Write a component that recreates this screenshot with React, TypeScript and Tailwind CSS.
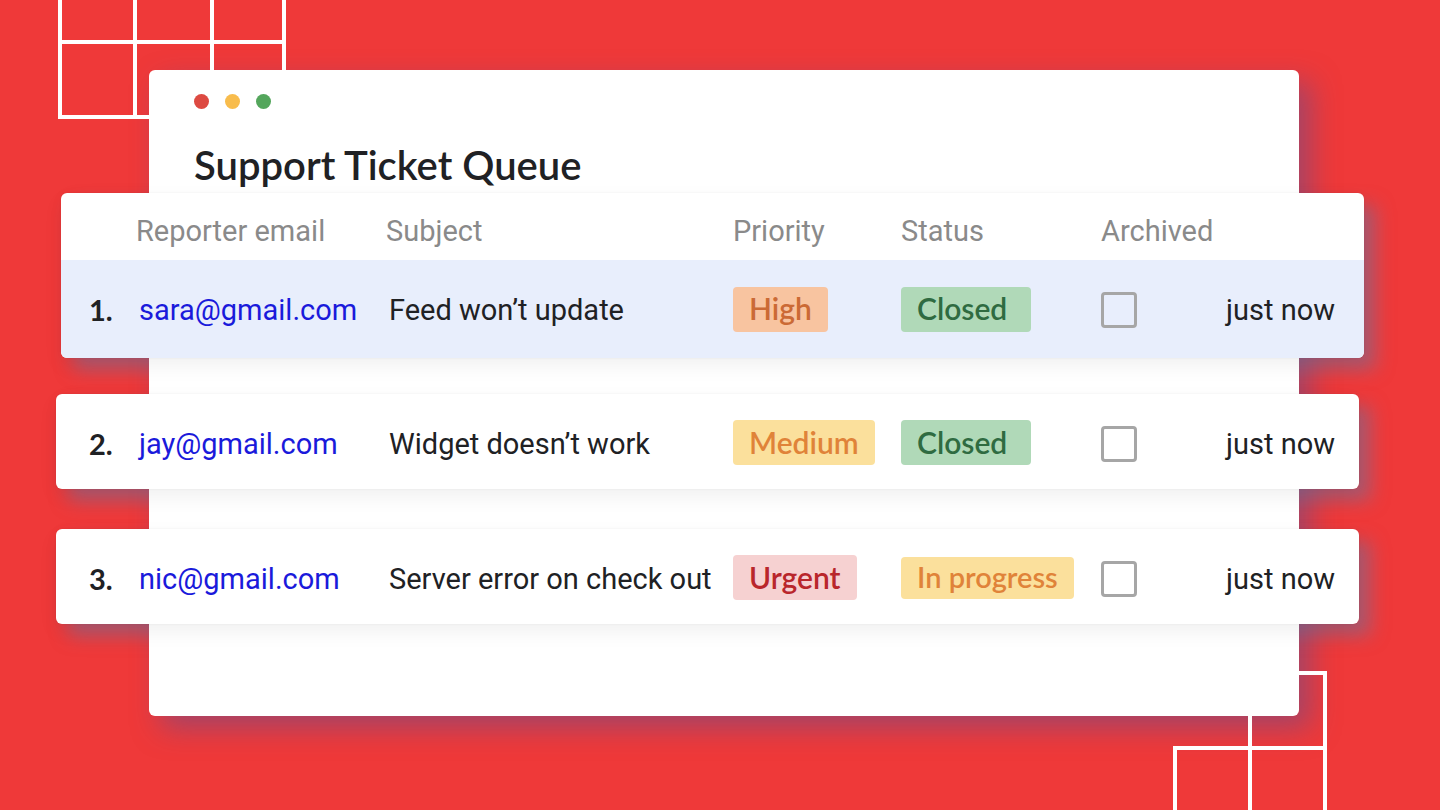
import React from "react";

type Tone = "high" | "medium" | "urgent" | "closed" | "progress";

type Ticket = {
  id: number;
  email: string;
  subject: string;
  priority: { label: string; tone: Tone };
  status: { label: string; tone: Tone };
  updated: string;
};

const tickets: Ticket[] = [
  {
    id: 1,
    email: "sara@gmail.com",
    subject: "Feed won’t update",
    priority: { label: "High", tone: "high" },
    status: { label: "Closed", tone: "closed" },
    updated: "just now",
  },
  {
    id: 2,
    email: "jay@gmail.com",
    subject: "Widget doesn’t work",
    priority: { label: "Medium", tone: "medium" },
    status: { label: "Closed", tone: "closed" },
    updated: "just now",
  },
  {
    id: 3,
    email: "nic@gmail.com",
    subject: "Server error on check out",
    priority: { label: "Urgent", tone: "urgent" },
    status: { label: "In progress", tone: "progress" },
    updated: "just now",
  },
];

const tones: Record<Tone, string> = {
  high: "h-[45px] px-4 text-[30px] bg-[#f8c4a0] text-[#cb6a35]",
  medium: "h-[45px] px-4 text-[30px] bg-[#fbe09c] text-[#e08339]",
  urgent: "h-[45px] px-4 text-[30px] bg-[#f6d1d1] text-[#b9262b]",
  closed: "h-[45px] pl-4 pr-6 text-[30px] bg-[#b0d9b8] text-[#2f6b41]",
  progress: "h-[42px] px-4 text-[29px] bg-[#fbe09c] text-[#e08339]",
};

function Badge({ label, tone }: { label: string; tone: Tone }) {
  return (
    <span
      className={`inline-flex items-center rounded-sm pb-0.5 font-['Lato',sans-serif] font-semibold whitespace-nowrap ${tones[tone]}`}
    >
      {label}
    </span>
  );
}

const columns = "grid grid-cols-[50fr_250fr_344fr_168fr_200fr_234fr] items-center";

function TicketRow({ ticket, className }: { ticket: Ticket; className: string }) {
  return (
    <tr className={`${columns} ${className}`}>
      <td className="pt-0.5 font-['Lato',sans-serif] text-[29px] font-bold">{ticket.id}.</td>
      <td className="pt-0.5">
        <a href={`mailto:${ticket.email}`} className="text-[#1a1adb]">
          {ticket.email}
        </a>
      </td>
      <td className="pt-0.5 whitespace-nowrap">{ticket.subject}</td>
      <td className="flex">
        <Badge {...ticket.priority} />
      </td>
      <td className="flex">
        <Badge {...ticket.status} />
      </td>
      <td className="flex items-center justify-between pt-0.5">
        <input
          type="checkbox"
          aria-label={`Archive ticket ${ticket.id}`}
          className="size-9 appearance-none rounded-sm border-3 border-[#a6a6a6] checked:bg-[#a6a6a6]"
        />
        <span className="whitespace-nowrap">{ticket.updated}</span>
      </td>
    </tr>
  );
}

const panel =
  "relative block rounded-md bg-white shadow-[0_0_2px_rgba(0,0,0,0.08),0_8px_20px_rgba(0,0,0,0.06)] before:absolute before:inset-0 before:-z-20 before:rounded-md before:shadow-[12px_12px_18px_rgba(110,120,165,0.5)]";

export default function App() {
  return (
    <main className="relative isolate min-h-screen overflow-hidden bg-[#ef3939] pt-[70px] pr-[141px] pb-[94px] pl-[149px] font-['Roboto',sans-serif] text-[29px] leading-9 text-[#202124]">
      <svg
        aria-hidden="true"
        className="absolute top-0 left-[58px] -z-10 h-[119px] w-[229px]"
        viewBox="0 0 229 119"
        fill="none"
        stroke="white"
        strokeWidth="4"
      >
        <path d="M2 0V117H229M77 0V117M154 0V117M226 0V117M0 42H228" />
      </svg>
      <svg
        aria-hidden="true"
        className="absolute right-[113px] bottom-0 -z-10 h-[139px] w-[154px]"
        viewBox="0 0 154 139"
        fill="none"
        stroke="white"
        strokeWidth="4"
      >
        <path d="M77 2H152V139M77 2V139M2 139V77H152" />
      </svg>

      <div className="relative before:absolute before:inset-0 before:-z-20 before:rounded-md before:shadow-[12px_12px_28px_rgba(90,80,150,0.5)]">
        <section className="rounded-md bg-white pt-6 pb-[92px]">
          <header className="px-[45px]">
            <div className="flex gap-4" aria-hidden="true">
              <span className="size-[15px] rounded-full bg-[#dd4a42]" />
              <span className="size-[15px] rounded-full bg-[#f8bc4c]" />
              <span className="size-[15px] rounded-full bg-[#54a65c]" />
            </div>
            <h1 className="pt-[38px] pb-[10px] font-['Lato',sans-serif] text-[40px] leading-9 font-semibold">
              Support Ticket Queue
            </h1>
          </header>

          <table className="block">
            <tbody className={`${panel} -mr-[65px] -ml-[88px]`}>
              <tr className="grid h-[67px] grid-cols-[50fr_250fr_347fr_168fr_200fr_234fr] items-center pt-2 pr-[29px] pl-[25px] text-left text-[#8a8a8a]">
                <td />
                <th scope="col" className="font-normal">Reporter email</th>
                <th scope="col" className="font-normal">Subject</th>
                <th scope="col" className="font-normal">Priority</th>
                <th scope="col" className="font-normal">Status</th>
                <th scope="col" className="font-normal">Archived</th>
              </tr>
              <TicketRow
                ticket={tickets[0]}
                className="h-[98px] rounded-b-md bg-[#e8eefc] pr-[29px] pl-7"
              />
            </tbody>
            <tbody className={`${panel} mt-9 -mr-[60px] -ml-[93px]`}>
              <TicketRow ticket={tickets[1]} className="h-[95px] pt-0.5 pr-6 pl-[33px]" />
            </tbody>
            <tbody className={`${panel} mt-10 -mr-[60px] -ml-[93px]`}>
              <TicketRow ticket={tickets[2]} className="h-[95px] pt-0.5 pr-6 pl-[33px]" />
            </tbody>
          </table>
        </section>
      </div>
    </main>
  );
}
